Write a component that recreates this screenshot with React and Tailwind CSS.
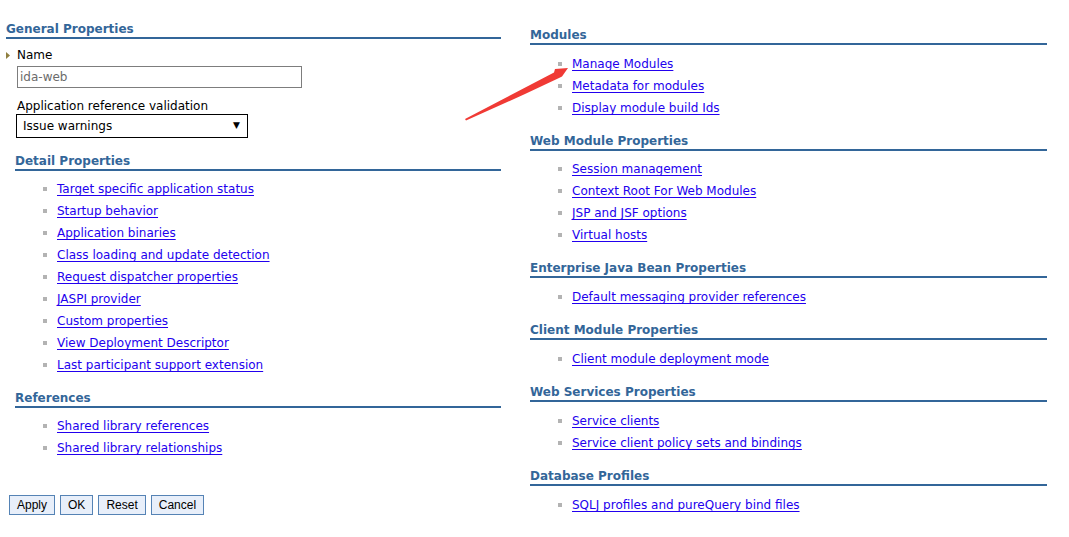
import React from "react";

function Heading({ children, className = "" }) {
  return (
    <div
      className={
        "text-[12px] font-bold leading-[16px] text-[#336699] border-b-2 border-[#336699] " +
        className
      }
    >
      {children}
    </div>
  );
}

function LinkList({ items, className = "" }) {
  return (
    <ul className={"flex flex-col " + className}>
      {items.map((t) => (
        <li key={t} className="flex items-center h-[22px]">
          <span className="ml-[28px] w-[4px] h-[4px] bg-[#b3b3b3] shrink-0" />
          <a
            href="#"
            className="ml-[10px] text-[12px] leading-[16px] text-[#2200ee] underline underline-offset-[2px]"
          >
            {t}
          </a>
        </li>
      ))}
    </ul>
  );
}

function Btn({ children }) {
  return (
    <button className="h-[20px] px-[7px] border border-[#5583b5] bg-[#e8effa] text-black text-[12px] leading-[18px] font-['Liberation_Sans',Arial,sans-serif]">
      {children}
    </button>
  );
}

export default function App() {
  return (
    <div className="relative w-[1069px] h-[537px] bg-white overflow-hidden flex font-['DejaVu_Sans',Verdana,sans-serif] text-[12px] text-black">
      {/* Left column */}
      <div className="w-[501px] flex flex-col shrink-0">
        <Heading className="ml-[6px] mt-[21px]">General Properties</Heading>
        <div className="ml-[6px] mt-[8px] h-[16px] flex items-center">
          <svg width="4" height="7" viewBox="0 0 4 7" className="shrink-0">
            <polygon points="0,0 4,3.5 0,7" fill="#8f7f3f" />
          </svg>
          <span className="ml-[7px] leading-[16px]">Name</span>
        </div>
        <div className="ml-[17px] mt-[3px] w-[285px] h-[22px] border border-[#7d7d7d] flex items-center px-[2px] text-[#6b6b6b]">
          ida-web
        </div>
        <div className="ml-[17px] mt-[10px] leading-[16px]">
          Application reference validation
        </div>
        <div className="ml-[16px] w-[232px] h-[24px] border border-black flex items-center justify-between pl-[6px] pr-[7px]">
          <span>Issue warnings</span>
          <span className="text-[9px]">▼</span>
        </div>

        <Heading className="ml-[15px] mt-[15px]">Detail Properties</Heading>
        <LinkList
          className="ml-[15px] mt-[7px]"
          items={[
            "Target specific application status",
            "Startup behavior",
            "Application binaries",
            "Class loading and update detection",
            "Request dispatcher properties",
            "JASPI provider",
            "Custom properties",
            "View Deployment Descriptor",
            "Last participant support extension",
          ]}
        />

        <Heading className="ml-[15px] mt-[14px]">References</Heading>
        <LinkList
          className="ml-[15px] mt-[7px]"
          items={["Shared library references", "Shared library relationships"]}
        />

        <div className="ml-[9px] mt-[36px] flex gap-[5px]">
          <Btn>Apply</Btn>
          <Btn>OK</Btn>
          <Btn>Reset</Btn>
          <Btn>Cancel</Btn>
        </div>
      </div>

      {/* Right column */}
      <div className="ml-[29px] w-[517px] flex flex-col pt-[27px] shrink-0">
        <Heading>Modules</Heading>
        <LinkList
          className="mt-[8px]"
          items={["Manage Modules", "Metadata for modules", "Display module build Ids"]}
        />
        <Heading className="mt-[14px]">Web Module Properties</Heading>
        <LinkList
          className="mt-[7px]"
          items={[
            "Session management",
            "Context Root For Web Modules",
            "JSP and JSF options",
            "Virtual hosts",
          ]}
        />
        <Heading className="mt-[14px]">Enterprise Java Bean Properties</Heading>
        <LinkList
          className="mt-[8px]"
          items={["Default messaging provider references"]}
        />
        <Heading className="mt-[14px]">Client Module Properties</Heading>
        <LinkList className="mt-[8px]" items={["Client module deployment mode"]} />
        <Heading className="mt-[14px]">Web Services Properties</Heading>
        <LinkList
          className="mt-[8px]"
          items={["Service clients", "Service client policy sets and bindings"]}
        />
        <Heading className="mt-[14px]">Database Profiles</Heading>
        <LinkList
          className="mt-[8px]"
          items={["SQLJ profiles and pureQuery bind files"]}
        />
      </div>

      {/* Red annotation arrow */}
      <svg
        className="absolute left-0 top-0 pointer-events-none"
        width="1069"
        height="537"
        viewBox="0 0 1069 537"
      >
        <polygon
          points="465,119 554,72.5 555,69 568,68 562,76.5 559,78 525,94 466,120.5"
          fill="#f03a35"
        />
      </svg>
    </div>
  );
}
